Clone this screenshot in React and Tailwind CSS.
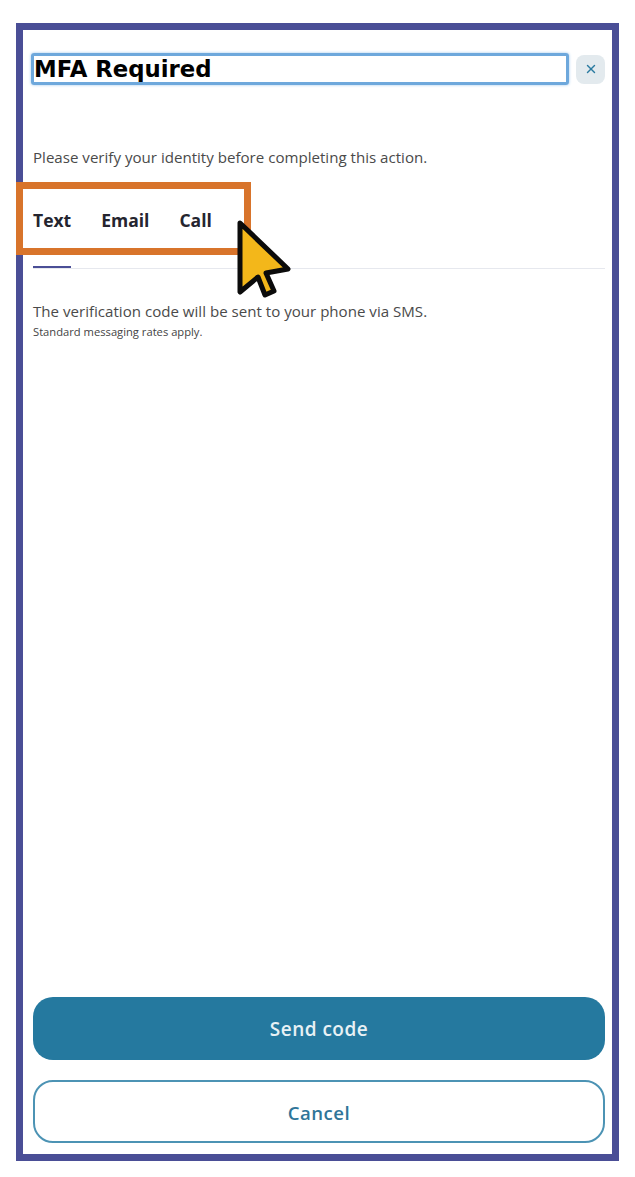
import React from 'react';
import { X } from 'lucide-react';

const TABS = ['Text', 'Email', 'Call'];

function Cursor() {
  return (
    <svg width="60" height="84" viewBox="0 0 60 84" className="absolute left-[235px] top-[217px]">
      <path
        d="M5 6 L53 52 L31 56 L39 74 L30 78 L23 60 L5 75 Z"
        fill="#f3b71a"
        stroke="#0b0b0b"
        strokeWidth="5"
        strokeLinejoin="round"
      />
    </svg>
  );
}

export default function App() {
  return (
    <div className="relative h-[1177px] w-[635px] bg-white pl-4 pt-[23px] font-['Open_Sans','Liberation_Sans',sans-serif]">
      <div className="flex h-[1138px] w-[603px] flex-col border-[7px] border-[#4a4e96] bg-white pb-[11px] pl-[10px] pr-[7px] pt-[23px]">
        <div className="flex items-center gap-[7px]">
          <h1 className="-ml-[2px] flex h-[32px] flex-1 items-center rounded-[3px] border-[3px] border-[#6ea8dc] font-['DejaVu_Sans',sans-serif] text-[22.8px] font-bold leading-none text-black shadow-[0_0_3px_#9cc6ec]">
            MFA Required
          </h1>
          <button className="flex h-[29px] w-[29px] items-center justify-center rounded-lg bg-[#e3eaee] text-[#2a7aa0]">
            <X size={14} strokeWidth={2.5} />
          </button>
        </div>

        <p className="mt-[62px] text-[15.1px] leading-5 text-[#4a4a4a]">
          Please verify your identity before completing this action.
        </p>

        <div className="mt-[41px] flex gap-[30px] text-[17.5px] font-bold leading-6 text-[#25252f]">
          {TABS.map((tab) => (
            <span key={tab}>{tab}</span>
          ))}
        </div>

        <div className="mt-[36px] h-px bg-[#e6e8ee]">
          <div className="relative -top-[2px] h-[2px] w-[38px] bg-[#4a4e96]" />
        </div>

        <p className="mt-[32px] text-[15.1px] leading-5 text-[#4a4a4a]">
          The verification code will be sent to your phone via SMS.
        </p>
        <p className="mt-[5px] text-[11.2px] leading-3 text-[#444]">Standard messaging rates apply.</p>

        <div className="mt-auto flex flex-col gap-5">
          <button className="h-[63px] rounded-[20px] bg-[#25799f] pt-[2px] text-[19px] font-semibold tracking-wide text-[#e8f1f5]">
            Send code
          </button>
          <button className="h-[63px] rounded-[20px] border-2 border-[#4c93b4] bg-white pt-[2px] text-[18.6px] font-semibold tracking-wide text-[#2f7599]">
            Cancel
          </button>
        </div>
      </div>

      <div className="absolute left-4 top-[182px] h-[73px] w-[235px] border-[7px] border-[#d8742b]" />
      <Cursor />
    </div>
  );
}
